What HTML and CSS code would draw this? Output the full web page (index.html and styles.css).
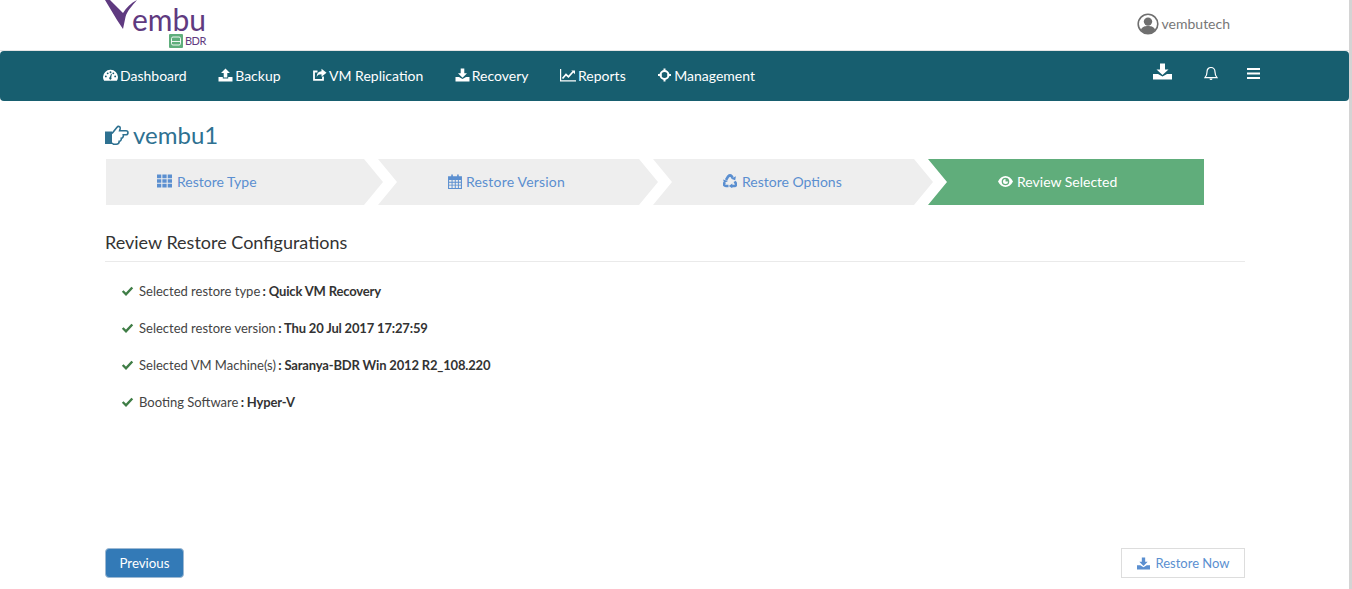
FILE: index.html
```html
<!DOCTYPE html>
<html lang="en">
<head>
<meta charset="utf-8">
<title>Vembu BDR - Review Restore</title>
<link rel="stylesheet" href="styles.css">
</head>
<body>
<div class="page">
  <header class="topbar">
    <div class="logo">
      <svg class="logo-v" viewBox="0 0 33 30" aria-hidden="true"><path d="M0 0H5L18 13C21 8 26 3 32 0 27 6 22 11 20.500 17L18 29 12 20Z" fill="#5f3a80"/></svg>
      <div class="logo-text">
        <span class="logo-word">embu</span>
        <span class="logo-sub"><svg class="bdr-icon" viewBox="0 0 14 14" aria-hidden="true"><rect width="14" height="14" rx="1" fill="#5fae7c"/><rect x="2.500" y="3" width="9" height="8" rx="1.500" fill="none" stroke="#fff" stroke-width=".9"/><path d="M2.500 7.500h9" stroke="#fff" stroke-width=".9"/></svg>BDR</span>
      </div>
    </div>
    <div class="user">
      <svg class="user-icon" viewBox="0 0 22 22" aria-hidden="true"><circle cx="11" cy="11" r="9.800" fill="#fff" stroke="#6f6f6f" stroke-width="1.600"/><circle cx="11" cy="8.600" r="4.200" fill="#6f6f6f"/><path d="M3.800 17C5 13.600 8 13 11 13 14 13 17 13.600 18.200 17 16.400 19.400 13.800 20.500 11 20.500 8.200 20.500 5.600 19.400 3.800 17Z" fill="#6f6f6f"/></svg>
      <span>vembutech</span>
    </div>
  </header>

  <nav class="navbar">
    <ul class="nav-list">
      <li class="nav-item"><svg class="nav-icon" viewBox="0 0 16 14"><path fill-rule="evenodd" d="M8 1.500a7.800 7.800 0 0 0-8 7.700c0 1.500.4 2.800 1.200 3.800h13.600c.8-1 1.200-2.300 1.200-3.800a7.800 7.800 0 0 0-8-7.700zM3 9.500a1 1 0 1 1 0-2 1 1 0 0 1 0 2zm2-3.300a1 1 0 1 1 0-2 1 1 0 0 1 0 2zm3-1.200a1 1 0 1 1 0-2 1 1 0 0 1 0 2zm0 7a1.500 1.500 0 0 1-.7-2.800L8.600 5.700l.8.2-.6 3.700A1.500 1.500 0 0 1 8 12zm5-2.500a1 1 0 1 1 0-2 1 1 0 0 1 0 2zM11 6.200a1 1 0 1 1 0-2 1 1 0 0 1 0 2z" fill="#fff"/></svg><span>Dashboard</span></li>
      <li class="nav-item"><svg class="nav-icon" viewBox="0 0 14 14"><path d="M7 .5 11.500 5H8.800v4.500H5.200V5H2.500zM0 9h4.300v1.400h5.400V9H14v4.500H0z" fill="#fff"/></svg><span>Backup</span></li>
      <li class="nav-item"><svg class="nav-icon" viewBox="0 0 14 14"><path d="M9 .8 14 4.800 9 8.800V6.300C6.500 6.300 5 7 4.200 9 4.200 5.500 6 3.500 9 3.300z" fill="#fff"/><path d="M10.500 8.500v3.300h-9V3.500h3.500" fill="none" stroke="#fff" stroke-width="1.800"/></svg><span>VM Replication</span></li>
      <li class="nav-item"><svg class="nav-icon" viewBox="0 0 14 14"><path d="M5.200.5h3.600v4.700h2.700L7 9.700 2.500 5.200h2.700zM0 9h3.500L7 11 10.500 9H14v4.500H0z" fill="#fff"/></svg><span>Recovery</span></li>
      <li class="nav-item"><svg class="nav-icon chart" viewBox="0 0 16 14"><path d="M.6 1v11.800H16" fill="none" stroke="#fff" stroke-width="1.200"/><path d="M2.500 10.500 6 6.500 8.500 8.800 13 3.800" fill="none" stroke="#fff" stroke-width="1.700"/><path d="M11.300 2.500H15V6.200z" fill="#fff"/></svg><span>Reports</span></li>
      <li class="nav-item"><svg class="nav-icon" viewBox="0 0 14 14"><circle cx="7" cy="7" r="4" fill="none" stroke="#fff" stroke-width="2"/><path d="M7 .5V4M7 10v3.500M.5 7H4M10 7h3.500" stroke="#fff" stroke-width="2"/></svg><span>Management</span></li>
    </ul>
    <div class="nav-actions">
      <svg class="act-dl" viewBox="0 0 19 17"><path d="M7 .5h5v6h3.500L9.500 12 3.500 6.500H7zM0 11h5l4.500 2.500L14 11h5v5.500H0z" fill="#fff"/></svg>
      <svg class="act-bell" viewBox="0 0 14 15"><path d="M7 1.500C4.500 1.500 3 3.400 3 6c0 3-1 4.500-2 5.700h12C12 10.500 11 9 11 6c0-2.600-1.500-4.500-4-4.500z" fill="none" stroke="#fff" stroke-width="1.200"/><path d="M5.500 12.500a1.500 1.500 0 0 0 3 0zM6.200 1h1.600v1H6.200z" fill="#fff"/></svg>
      <svg class="act-bars" viewBox="0 0 13 11"><path d="M0 0h13v2H0zM0 4.500h13v2H0zM0 9h13v2H0z" fill="#fff"/></svg>
    </div>
  </nav>

  <main class="content">
    <h1 class="title"><svg class="title-icon" viewBox="0 0 25 22"><path d="M8 9.500 13 3.200C14 1.700 16.700 2.200 16.200 4.500L15.600 6.800H22C24.600 6.800 24.600 10.800 22 10.800H19.300C19.800 12.800 18.400 14.200 17.300 14.300 17.500 16.200 16.300 17.200 15.200 17.300 15.200 19.500 13.800 20.300 12.300 20.300H9.500L8 19" fill="none" stroke="#2e7191" stroke-width="1.600"/><path d="M1 7.500h7v12.500H1z" fill="#2e7191"/></svg><span>vembu1</span></h1>

    <div class="steps">
      <div class="step step-first"><svg class="step-icon" viewBox="0 0 14 12"><path d="M0 0h4v3.400H0zM5 0h4v3.400H5zM10 0h4v3.400h-4zM0 4.300h4v3.400H0zM5 4.300h4v3.400H5zM10 4.300h4v3.400h-4zM0 8.600h4V12H0zM5 8.600h4V12H5zM10 8.600h4V12h-4z" fill="#5b8fd0"/></svg><span>Restore Type</span></div>
      <div class="step step-mid step-version"><svg class="step-icon" viewBox="0 0 13 14"><path fill-rule="evenodd" d="M0 2.200h3V.5h1.500v1.700h4V.5H10v1.700h3V14H0zM1 5.500v1.800h2.300V5.500zm3.200 0v1.800h2.100V5.500zm3 0v1.800h2V5.500zm2.900 0v1.800H12V5.500zM1 8.100v1.900h2.300V8.100zm3.200 0v1.900h2.100V8.100zm3 0v1.900h2V8.100zm2.900 0v1.900H12V8.100zM1 10.800V13h2.300v-2.200zm3.200 0V13h2.100v-2.200zm3 0V13h2v-2.200zm2.900 0V13H12v-2.200z" fill="#5b8fd0"/></svg><span>Restore Version</span></div>
      <div class="step step-mid"><svg class="step-icon" viewBox="0 0 14 14"><g fill="none" stroke="#5b8fd0" stroke-width="2.600"><path d="M3 6 5.200 2.400Q7 .6 8.800 2.400L9.600 3.800"/><path d="M11.700 7.400 12.900 9.500Q13.400 11.800 11.500 12H9"/><path d="M5.500 12H3Q.6 11.800 1.100 9.500L1.700 8.500"/></g><path d="M8 4.800 12.200 6.300 12.900 2.200zM9.300 9.400 5.800 12 9.300 14.300zM.1 5.600 1.200 9.300 5 7.100z" fill="#5b8fd0"/></svg><span>Restore Options</span></div>
      <div class="step step-active"><svg class="step-icon eye" viewBox="0 0 15 11"><path fill-rule="evenodd" d="M7.500 0C4.200 0 1.700 2.200 0 5.500 1.700 8.800 4.200 11 7.500 11s5.800-2.200 7.500-5.500C13.300 2.200 10.800 0 7.500 0zm0 9.300a3.800 3.800 0 1 1 0-7.600 3.800 3.800 0 0 1 0 7.600zm0-6.300a2.500 2.500 0 1 0 2.500 2.500H7.500z" fill="#fff"/></svg><span>Review Selected</span></div>
    </div>

    <h2 class="section-title">Review Restore Configurations</h2>

    <ul class="summary">
      <li class="summary-row"><svg class="check" viewBox="0 0 12 10"><path d="M1.200 5 4.500 8.300 10.800 1.500" fill="none" stroke="#3f7d46" stroke-width="2.400"/></svg><span>Selected restore type <b>: Quick VM Recovery</b></span></li>
      <li class="summary-row"><svg class="check" viewBox="0 0 12 10"><path d="M1.200 5 4.500 8.300 10.800 1.500" fill="none" stroke="#3f7d46" stroke-width="2.400"/></svg><span>Selected restore version <b>: Thu 20 Jul 2017 17:27:59</b></span></li>
      <li class="summary-row"><svg class="check" viewBox="0 0 12 10"><path d="M1.200 5 4.500 8.300 10.800 1.500" fill="none" stroke="#3f7d46" stroke-width="2.400"/></svg><span>Selected VM Machine(s) <b>: Saranya-BDR Win 2012 R2_108.220</b></span></li>
      <li class="summary-row"><svg class="check" viewBox="0 0 12 10"><path d="M1.200 5 4.500 8.300 10.800 1.500" fill="none" stroke="#3f7d46" stroke-width="2.400"/></svg><span>Booting Software <b>: Hyper-V</b></span></li>
    </ul>

    <div class="actions">
      <button class="btn btn-prev" type="button">Previous</button>
      <button class="btn btn-restore" type="button"><svg class="restore-icon" viewBox="0 0 14 14"><path d="M5.200.5h3.600v4.700h2.700L7 9.700 2.500 5.200h2.700zM0 9h3.500L7 11 10.500 9H14v4.500H0z" fill="#5b8fd0"/></svg><span>Restore Now</span></button>
    </div>
  </main>
</div>
</body>
</html>
```

FILE: styles.css
```css
* { box-sizing: border-box; }
html, body { margin: 0; padding: 0; height: 589px; overflow: hidden; background: #d4d4d4; }
body { font-family: Lato, "Open Sans", sans-serif; color: #333; font-size: 13px; }
.page { width: 1349px; height: 589px; background: #fff; }

.topbar { height: 51px; display: flex; justify-content: space-between; border-bottom: 1px solid #e4e4e4; padding: 0 119px 0 105px; }
.logo { display: flex; align-items: flex-start; }
.logo-v { width: 33px; height: 30px; display: block; }
.logo-text { display: flex; flex-direction: column; align-items: flex-end; margin-left: -6px; }
.logo-word { font-size: 30px; line-height: 28px; margin-top: 5px; color: #5f3a80; }
.logo-sub { display: flex; align-items: center; gap: 2px; font-size: 11px; line-height: 14px; letter-spacing: -0.4px; color: #5f3a80; margin-top: 1px; }
.bdr-icon { width: 14px; height: 14px; }
.user { display: flex; align-items: center; gap: 3px; color: #777; font-size: 14px; padding-bottom: 3px; }
.user-icon { width: 22px; height: 22px; }

.navbar { height: 50px; background: #175e6f; border-radius: 4px; display: flex; justify-content: space-between; align-items: center; color: #fff; padding: 0 89px 0 103px; }
.nav-list { display: flex; list-style: none; margin: 0; padding: 0 0 2px; gap: 31.5px; font-size: 14px; }
.nav-item { display: flex; align-items: center; gap: 2px; }
.nav-icon { width: 15px; height: 14px; }
.nav-icon.chart { width: 16px; }
.nav-actions { display: flex; align-items: center; margin-bottom: 6px; }
.act-dl { width: 19px; height: 17px; margin: 0 32px 4px 0; }
.act-bell { width: 14px; height: 15px; margin-right: 29px; }
.act-bars { width: 13px; height: 11px; }

.content { padding: 0 104px 0 105px; }
.title { margin: 20px 0 0 -1px; font-size: 24px; font-weight: 400; line-height: 27px; color: #2e7191; display: flex; align-items: center; gap: 4px; }
.title-icon { width: 25px; height: 22px; }

.steps { display: flex; margin: 11px 0 0 1px; width: 1098px; height: 46px; }
.step { height: 46px; display: flex; align-items: center; gap: 5px; font-size: 14px; color: #5b8fd0; background: #eee; margin-right: -5px; padding: 0 0 2px 70px; }
.step-first { width: 277px; padding-left: 51px; clip-path: polygon(0 0, calc(100% - 19px) 0, 100% 50%, calc(100% - 19px) 100%, 0 100%); }
.step-first .step-icon { width: 15px; }
.step-mid { width: 280px; clip-path: polygon(0 0, calc(100% - 19px) 0, 100% 50%, calc(100% - 19px) 100%, 0 100%, 19px 50%); }
.step-version { gap: 4px; }
.step-version .step-icon { height: 15px; }
.step-version span { letter-spacing: 0.2px; }
.step-active { width: 276px; margin-right: 0; background: #60ad7b; color: #fff; gap: 4px; clip-path: polygon(0 0, 100% 0, 100% 100%, 0 100%, 19px 50%); }
.step-icon { width: 14px; height: 14px; }
.step-icon.eye { width: 15px; height: 11px; }

.section-title { margin: 26px 0 0; padding-bottom: 8px; font-size: 18px; line-height: 22px; font-weight: 400; color: #333; border-bottom: 1px solid #eaeaea; }
.summary { list-style: none; margin: 10px 0 0; padding: 0 0 0 16px; }
.summary-row { height: 37px; display: flex; align-items: center; gap: 5px; font-size: 13px; color: #444; }
.summary-row b { font-weight: 700; color: #333; letter-spacing: -0.17px; margin-left: -1px; }
.check { width: 13px; height: 10px; }

.actions { display: flex; justify-content: space-between; margin-top: 128px; }
.btn { height: 30px; font: 13.3px Lato, sans-serif; border-radius: 4px; display: flex; align-items: center; padding: 0; }
.btn-prev { width: 79px; justify-content: center; color: #fff; background: #337ab7; border: 1px solid #9db9d3; }
.btn-restore { width: 124px; justify-content: center; gap: 5px; font-size: 13px; color: #5b8fd0; background: #fff; border: 1px solid #ddd; border-radius: 0; padding-left: 1px; }
.restore-icon { width: 13px; height: 13px; }
```
